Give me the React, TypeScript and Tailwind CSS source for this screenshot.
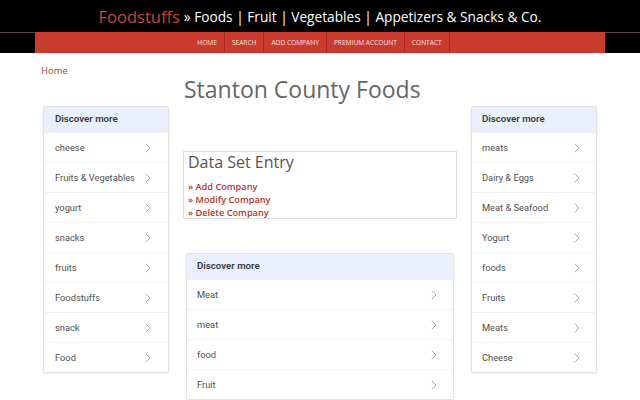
import React from "react";

const Chevron = () => (
  <svg width="6" height="10" viewBox="0 0 6 10" fill="none" className="shrink-0">
    <path d="M1 1l4 4-4 4" stroke="#a0a0a0" strokeWidth="0.9" strokeLinecap="round" strokeLinejoin="round" />
  </svg>
);

const Discover = ({ items, padX }: { items: string[]; padX: string }) => (
  <div className="border border-[#e3e3e3] bg-white shadow-[0_1px_2px_rgba(0,0,0,0.08)] rounded-[2px]" style={{ fontFamily: "Roboto, 'Noto Sans', sans-serif" }}>
    <div className={`h-[25px] bg-[#e8f0fc] flex items-center ${padX} text-[9.7px] font-semibold text-[#3a3a3a]`}>Discover more</div>
    {items.map((it) => (
      <div key={it} className={`h-[30px] flex items-center justify-between ${padX} border-t border-[#f1f1f1] text-[9.3px] text-[#505050]`}>
        <span>{it}</span>
        <span className="pr-[6px]"><Chevron /></span>
      </div>
    ))}
  </div>
);

export default function App() {
  const nav = ["HOME", "SEARCH", "ADD COMPANY", "PREMIUM ACCOUNT", "CONTACT"];
  return (
    <div className="w-[640px] h-[400px] overflow-hidden bg-white" style={{ fontFamily: "'Open Sans', sans-serif" }}>
      <div className="bg-black h-[32px] flex items-center justify-center gap-[4px] pt-[2px]">
        <span className="text-[16.5px] text-[#c8443c] leading-none">Foodstuffs</span>
        <span className="text-[13.7px] text-white leading-none">» Foods | Fruit | Vegetables | Appetizers &amp; Snacks &amp; Co.</span>
      </div>
      <div className="bg-black h-[21px] border-t border-[#5b4444] flex">
        <div className="w-[35px]" />
        <div className="flex-1 bg-[#cb3a2e] -mt-[1px] flex justify-center">
          {nav.map((n, i) => (
            <div key={n} className={`px-[7px] flex items-center text-[6.6px] text-[#f7e3e0] ${i > 0 ? "border-l border-[#a8281f]" : ""} ${i === nav.length - 1 ? "border-r border-[#a8281f]" : ""}`}>
              {n}
            </div>
          ))}
        </div>
        <div className="w-[35px]" />
      </div>
      <div className="px-[41px] pt-[11px]">
        <div className="text-[9.5px] text-[#a5453b] leading-[13px]">Home</div>
      </div>
      <div className="flex items-start pl-[43px]">
        <div className="w-[126px] mt-[29px]">
          <Discover padX="px-[11px]" items={["cheese", "Fruits & Vegetables", "yogurt", "snacks", "fruits", "Foodstuffs", "snack", "Food"]} />
        </div>
        <div className="w-[274px] ml-[14px]">
          <div className="text-[23px] text-[#666] leading-[30px] -mt-[3px] pl-[1px]">Stanton County Foods</div>
          <div className="mt-[47px] border border-[#dcdcdc] h-[68px] px-[4px]">
            <div className="text-[16px] text-[#555] leading-[22px] mt-[-1px]">Data Set Entry</div>
            <div className="mt-[7px] text-[9.2px] font-semibold text-[#b5342b] leading-[13px]">
              <div>» Add Company</div>
              <div>» Modify Company</div>
              <div>» Delete Company</div>
            </div>
          </div>
          <div className="mt-[34px] mx-[3px]">
            <Discover padX="px-[10px]" items={["Meat", "meat", "food", "Fruit"]} />
          </div>
        </div>
        <div className="w-[126px] ml-[14px] mt-[29px]">
          <Discover padX="px-[10px]" items={["meats", "Dairy & Eggs", "Meat & Seafood", "Yogurt", "foods", "Fruits", "Meats", "Cheese"]} />
        </div>
      </div>
    </div>
  );
}
